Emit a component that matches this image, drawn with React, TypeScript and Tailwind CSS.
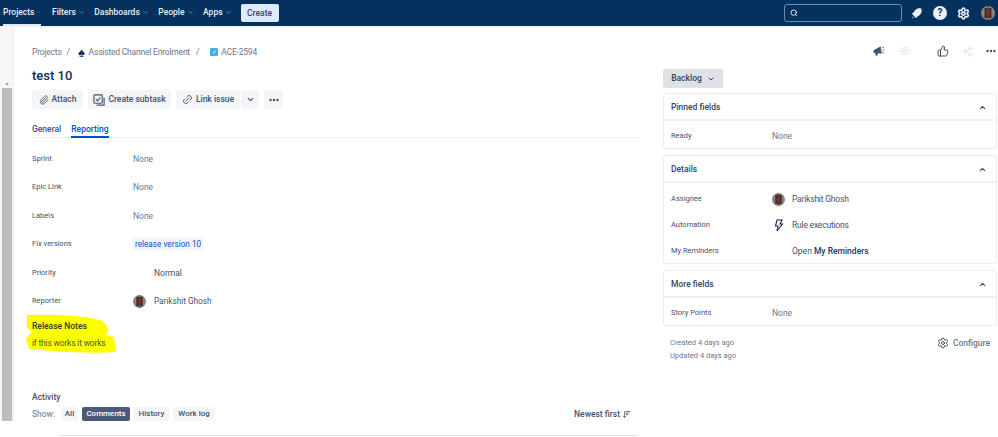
import { ChevronDown, ChevronUp, Ellipsis, Eye, Link2, Paperclip, Search, Settings, Share2, ThumbsUp, ArrowDownWideNarrow } from "lucide-react";

const Avatar = ({ size = 13 }: { size?: number }) => (
	<svg width={size} height={size} viewBox="0 0 14 14" className="shrink-0">
		<circle cx="7" cy="7" r="7" fill="#8a847b" />
		<path d="M3.5 2h7v10h-7z" fill="#3a3532" />
		<path d="M6.5 0.5h1.2v13H6.5z" fill="#a02a2a" />
		<path d="M5.5 5h3.5v4H5.5z" fill="#8c2b2b" />
	</svg>
);

const NavItem = ({ label, active }: { label: string; active?: boolean }) => (
	<div
		className={`flex h-[26px] items-center gap-[2px] border-b-2 text-[8.5px] font-medium text-[#e6edf5] ${
			active ? "border-[#dfe7ef]" : "border-transparent"
		}`}
	>
		{label}
		<ChevronDown size={7} className="text-[#9fb3c8]" />
	</div>
);

const ActionButton = ({ icon, label, width }: { icon: React.ReactNode; label: string; width: string }) => (
	<div className={`flex h-[19px] items-center justify-center gap-[3px] rounded-[3px] bg-[#f4f5f7] text-[8.5px] font-medium text-[#42526e] ${width}`}>
		{icon}
		{label}
	</div>
);

const FieldRow = ({ label, children, className }: { label: string; children?: React.ReactNode; className: string }) => (
	<div className={`flex h-[14px] items-center ${className}`}>
		<div className="w-[101px] text-[7.5px] text-[#42526e]">{label}</div>
		{children}
	</div>
);

const SidePanel = ({ title, children, body }: { title: string; children: React.ReactNode; body: string }) => (
	<div className="rounded-[3px] border border-[#ebecf0] bg-white">
		<div className="flex h-[27px] items-center justify-between border-b-2 border-[#f0f1f3] pt-px pl-[7px] pr-[9px] text-[8.5px] font-medium text-[#344563]">
			{title}
			<ChevronUp size={9} strokeWidth={3} className="text-[#42526e]" />
		</div>
		<div className={body}>{children}</div>
	</div>
);

const SideRow = ({ label, children }: { label: string; children: React.ReactNode }) => (
	<div className="flex h-[26px] items-center pt-[2px] pl-[7px]">
		<div className="w-[101px] text-[7.5px] text-[#42526e]">{label}</div>
		{children}
	</div>
);

const FilterTab = ({ label, width, active }: { label: string; width: string; active?: boolean }) => (
	<div
		className={`flex h-[14px] items-center justify-center rounded-[2px] text-[8px] font-medium ${width} ${
			active ? "bg-[#4a5a78] text-white" : "bg-[#f4f5f7] text-[#42526e]"
		}`}
	>
		{label}
	</div>
);

export default function App() {
	return (
		<div className="relative flex h-[437px] w-[998px] flex-col overflow-hidden bg-white font-['Roboto',sans-serif]">
			<header className="flex h-[26px] shrink-0 items-center bg-[#05315f] pr-[3px]">
				<div className="flex items-center gap-[9.5px]">
					<div className="mr-[1.5px] w-[41px] pl-[3px]">
						<NavItem label="Projects" active />
					</div>
					<NavItem label="Filters" />
					<NavItem label="Dashboards" />
					<NavItem label="People" />
					<NavItem label="Apps" />
				</div>
				<div className="ml-[9px] flex h-[18px] w-[38px] items-center justify-center rounded-[2px] bg-[#deebff] text-[8.5px] font-medium text-[#344563]">
					Create
				</div>
				<div className="ml-auto flex h-[18px] w-[118px] items-center rounded-[3px] border border-[#6f8bab] bg-[#05315f] pl-[5px]">
					<Search size={8} strokeWidth={3} className="text-[#dfe7ef]" />
				</div>
				<svg width="12" height="12" viewBox="0 0 14 14" className="ml-[9px] text-[#edf2f7]">
					<path d="M1 8 C3 7 4 5 5 3.5 C7 1.5 10 1 12 2 C13 4 12.5 7 10.5 9 C9 10 7 11 6 13 Z M2 11 L3.5 12.5 L1.5 13 Z" fill="currentColor" />
				</svg>
				<div className="ml-[10px] flex h-[14px] w-[14px] items-center justify-center rounded-full bg-[#edf2f7] text-[10px] leading-none font-bold text-[#05315f]">
					?
				</div>
				<Settings size={13} strokeWidth={3} className="ml-[10px] text-[#edf2f7]" />
				<div className="ml-[11px]">
					<Avatar size={14} />
				</div>
			</header>
			<div className="h-[2px] shrink-0 bg-[#f4f5f7]" />
			<div className="flex min-h-0 flex-1">
				<div className="flex h-[393px] w-[14px] shrink-0 flex-col border-r border-[#ececec] bg-[#f6f6f6] pl-[2px]">
					<div className="mt-[51px] flex h-[9px] w-[10px] items-center justify-center text-[5px] leading-none text-[#a0a0a0]">▲</div>
					<div className="h-[333px] w-[10px] bg-[#bdbdbd]" />
				</div>
				<main className="w-[626px] shrink-0 pl-[18px]">
					<nav className="mt-[18px] flex h-[12px] items-center text-[8.5px] tracking-[-0.2px] text-[#6b778c]">
						Projects
						<span className="mx-[5px]">/</span>
						<span className="mr-[4px] ml-[3px] text-[13px] leading-none text-[#172b4d]">♠</span>
						Assisted Channel Enrolment
						<span className="mx-[6px]">/</span>
						<span className="mr-[3px] ml-[5px] flex h-[8px] w-[8px] items-center justify-center rounded-[1px] bg-[#4bade8] text-[6px] leading-none text-white">✓</span>
						ACE-2594
					</nav>
					<h1 className="mt-[9px] h-[17px] text-[13px] leading-[17px] font-medium text-[#172b4d]">test 10</h1>
					<div className="mt-[6px] flex items-center">
						<ActionButton width="w-[51px]" icon={<Paperclip size={10} />} label="Attach" />
						<div className="ml-[5px]">
							<ActionButton
								width="w-[83px]"
								icon={
									<svg width="12" height="12" viewBox="0 0 13 13" fill="none" stroke="#42526e" strokeWidth="1.2">
										<rect x="1" y="1" width="9" height="9" rx="1" />
										<path d="M3 5.5 L5 7.5 L8 3.5M12 4v8H4" />
									</svg>
								}
								label="Create subtask"
							/>
						</div>
						<div className="ml-[5px] flex">
							<ActionButton width="w-[64px]" icon={<Link2 size={11} className="-rotate-45" />} label="Link issue" />
							<div className="ml-px flex h-[19px] w-[18px] items-center justify-center rounded-[3px] bg-[#f4f5f7] text-[#42526e]">
								<ChevronDown size={9} strokeWidth={3} />
							</div>
						</div>
						<div className="ml-[5px] flex h-[19px] w-[19px] items-center justify-center rounded-[3px] bg-[#f4f5f7] text-[#42526e]">
							<Ellipsis size={12} strokeWidth={3} />
						</div>
					</div>
					<div className="mt-[14px] flex h-[15px] gap-[10px] border-b border-[#ebecf0] text-[8.5px] font-medium text-[#42526e]">
						<div>General</div>
						<div className="-mb-px border-b-2 border-[#0052cc] text-[#0052cc]">Reporting</div>
					</div>
					<div className="mt-[14px] flex flex-col text-[8.5px] text-[#6b778c]">
						<FieldRow label="Sprint" className="">None</FieldRow>
						<FieldRow label="Epic Link" className="mt-[14px]">None</FieldRow>
						<FieldRow label="Labels" className="mt-[15px]">None</FieldRow>
						<FieldRow label="Fix versions" className="mt-[14px]">
							<span className="rounded-[2px] bg-[#f4f5f7] px-[2px] text-[8.2px] text-[#0052cc]">release version 10</span>
						</FieldRow>
						<FieldRow label="Priority" className="mt-[15px]">
							<span className="ml-[21px] text-[#42526e]">Normal</span>
						</FieldRow>
						<FieldRow label="Reporter" className="mt-[14px]">
							<Avatar />
							<span className="ml-[8px] text-[8.2px] text-[#42526e]">Parikshit Ghosh</span>
						</FieldRow>
					</div>
					<div className="relative mt-[9px] h-[38px]">
						<svg width="90" height="40" viewBox="0 0 90 40" className="absolute -left-[6px] top-[-3px]">
							<path d="M1 1 C28 0 60 1 76 7 C84 13 84 19 79 21 L88 23 L90 38 C60 40 25 37 3 35 L0 24 L6 18 L1 14 Z" fill="#fdff00" />
						</svg>
						<div className="relative pt-[3px] text-[8.5px] leading-[12px] font-medium text-[#2f3a20]">Release Notes</div>
						<div className="relative mt-[5px] text-[8.5px] leading-[12px] tracking-[-0.2px] text-[#4d5a30]">if this works it works</div>
					</div>
					<div className="mt-[35px] text-[8.5px] leading-[14px] font-medium text-[#42526e]">Activity</div>
					<div className="mt-[3px] flex items-center pr-[9px]">
						<span className="w-[29px] text-[8.5px] text-[#6b778c]">Show:</span>
						<div className="flex gap-[4px]">
							<FilterTab width="w-[17px]" label="All" />
							<FilterTab width="w-[48px]" label="Comments" active />
							<FilterTab width="w-[35px]" label="History" />
							<FilterTab width="w-[42px]" label="Work log" />
						</div>
						<div className="ml-auto flex items-center gap-[2px] text-[8.5px] font-medium text-[#42526e]">
							Newest first
							<ArrowDownWideNarrow size={9} />
						</div>
					</div>
					<div className="mt-[14px] ml-[28px] h-px w-[578px] bg-[#dfe1e6]" />
				</main>
				<aside className="ml-[23px] flex-1 pr-px">
					<div className="mt-[41px] flex h-[19px] w-[60px] items-center justify-center gap-[5px] rounded-[2px] bg-[#dfe1e6] text-[8.5px] font-medium text-[#344563]">
						Backlog
						<ChevronDown size={8} strokeWidth={3} />
					</div>
					<div className="mt-[5px] flex flex-col gap-[6px] text-[8.5px] text-[#42526e]">
						<SidePanel title="Pinned fields" body="pt-px">
							<SideRow label="Ready">
								<span className="text-[#6b778c]">None</span>
							</SideRow>
						</SidePanel>
						<SidePanel title="Details" body="pt-[2px]">
							<SideRow label="Assignee">
								<Avatar />
								<span className="ml-[7px] tracking-[-0.2px]">Parikshit Ghosh</span>
							</SideRow>
							<SideRow label="Automation">
								<svg width="13" height="13" viewBox="0 0 13 13" fill="none" stroke="#172b4d" strokeWidth="1.1" className="shrink-0">
									<path d="M5 1h5L8 5h2.5L5 12l1-5H3.5z" />
								</svg>
								<span className="ml-[7px] tracking-[-0.2px]">Rule executions</span>
							</SideRow>
							<SideRow label="My Reminders">
								<span className="ml-[20px]">
									Open <span className="font-medium text-[#253858]">My Reminders</span>
								</span>
							</SideRow>
						</SidePanel>
						<SidePanel title="More fields" body="pt-px">
							<SideRow label="Story Points">
								<span className="text-[#6b778c]">None</span>
							</SideRow>
						</SidePanel>
					</div>
					<div className="mt-[10px] flex items-start justify-between pl-[7px] pr-[7px]">
						<div className="text-[7.5px] leading-[13px] text-[#6b778c]">
							<div>Created 4 days ago</div>
							<div>Updated 4 days ago</div>
						</div>
						<div className="mt-px flex items-center gap-[4px] text-[8.5px] font-medium text-[#6b778c]">
							<Settings size={12} className="text-[#42526e]" />
							Configure
						</div>
					</div>
				</aside>
			</div>
			<div className="absolute top-[45px] right-[1px] flex items-center text-[#42526e]">
				<svg width="12" height="12" viewBox="0 0 13 13" fill="currentColor">
					<path d="M1 6 L8 2 L9 9 L5 8.5 L4.5 11 L3 11 L3 8 L1 8Z M10 3 L12 2 M10 5.5 L12.5 5.5 M10 8 L12 9" stroke="currentColor" strokeWidth="0.8" />
				</svg>
				<Eye size={12} className="ml-[14px] text-[#dfe1e6]" />
				<ThumbsUp size={12} className="ml-[26px]" />
				<Share2 size={11} className="ml-[13px] text-[#dfe1e6]" />
				<Ellipsis size={12} strokeWidth={3} className="ml-[12px]" />
			</div>
		</div>
	);
}
